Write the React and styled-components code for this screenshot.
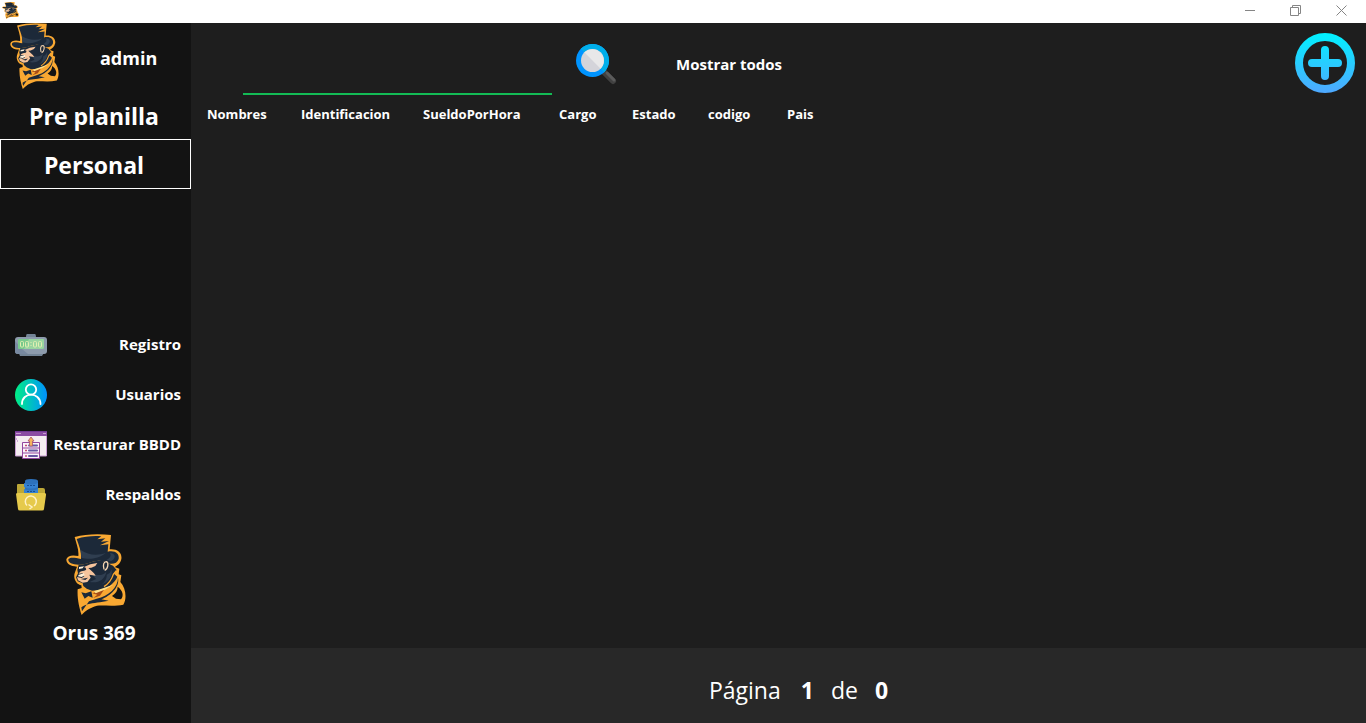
import React, { useId } from "react";
import styled, { createGlobalStyle } from "styled-components";

const GlobalStyle = createGlobalStyle`
  *, *::before, *::after { box-sizing: border-box; }
  body {
    margin: 0;
    background: #1e1e1e;
    color: #ffffff;
    font-family: "Segoe UI", "Open Sans", "Noto Sans", sans-serif;
    font-size: 15px;
    line-height: 20px;
  }
  button, input { font: inherit; color: inherit; }
  button { background: none; border: 0; padding: 0; cursor: pointer; }
  svg { display: block; flex: none; }
`;

const Window = styled.div`
  min-height: 100vh;
  display: flex;
  flex-direction: column;
`;

const TitleBar = styled.header`
  height: 23px;
  padding: 0 2px;
  display: flex;
  align-items: flex-start;
  justify-content: space-between;
  background: #ffffff;
  color: #858585;
`;

const AppMark = styled.div`
  padding-top: 2px;
`;

const WindowControls = styled.div`
  display: flex;
`;

const WindowButton = styled.button`
  width: 46px;
  height: 21px;
  display: grid;
  place-items: center;
`;

const Body = styled.div`
  flex: 1;
  display: grid;
  grid-template-columns: 191px 1fr;
`;

const Sidebar = styled.nav`
  display: flex;
  flex-direction: column;
  background: #131313;
`;

const Account = styled.div`
  height: 67px;
  padding-left: 10px;
  display: flex;
  align-items: flex-start;
  gap: 41px;
`;

const AccountName = styled.span`
  padding-top: 20px;
  font-size: 18px;
  line-height: 30px;
  font-weight: 700;
`;

const MainLink = styled.button`
  height: ${(p) => (p.$active ? 50 : 49)}px;
  padding: 2px 3px 0 0;
  border: ${(p) => (p.$active ? "1px solid #ffffff" : "0")};
  font-size: 23px;
  line-height: 32px;
  font-weight: 700;
`;

const ToolLinks = styled.div`
  margin-top: 131px;
  display: flex;
  flex-direction: column;
`;

const ToolLink = styled.button`
  height: 50px;
  padding: 0 10px 0 15px;
  display: flex;
  align-items: center;
  justify-content: space-between;
  font-weight: 700;
  white-space: nowrap;
`;

const ToolName = styled.span`
  padding-bottom: 2px;
`;

const Brand = styled.div`
  padding: 14px 0 0;
  display: flex;
  flex-direction: column;
  align-items: center;
  gap: 4px;
`;

const BrandName = styled.span`
  padding-right: 3px;
  font-size: 19px;
  line-height: 28px;
  font-weight: 700;
`;

const Content = styled.main`
  display: flex;
  flex-direction: column;
  background: #1e1e1e;
  min-width: 0;
`;

const Toolbar = styled.div`
  height: 72px;
  padding: 0 11px 0 52px;
  display: flex;
  align-items: center;
`;

const SearchInput = styled.input`
  align-self: stretch;
  width: 309px;
  padding: 20px 4px 0;
  background: transparent;
  border: 0;
  border-bottom: 2px solid #13bb55;
  outline: none;
  font-size: 24px;
`;

const IconButton = styled.button`
  margin-left: ${(p) => (p.$end ? "auto" : "24px")};
  padding-top: ${(p) => (p.$end ? "8px" : "10px")};
`;

const ShowAll = styled.button`
  margin-left: 59px;
  padding-top: 9px;
  font-weight: 700;
`;

const Table = styled.table`
  align-self: flex-start;
  border-collapse: collapse;
  table-layout: fixed;
  width: 656px;
`;

const HeadCell = styled.th`
  width: ${(p) => p.$width}px;
  height: 38px;
  padding: 0 0 0 16px;
  text-align: left;
  font-size: 13px;
  font-weight: 700;
`;

const Pager = styled.footer`
  height: 75px;
  margin-top: auto;
  padding: 8px 0 0 40px;
  display: flex;
  align-items: center;
  justify-content: center;
  gap: 20px;
  background: #282828;
  font-size: 23px;
  line-height: 32px;
`;

const Position = styled.div`
  display: flex;
  gap: 17px;
`;

function Logo({ width, height }) {
  return (
    <svg width={width} height={height} viewBox="32 28 180 243" preserveAspectRatio="none" aria-hidden="true">
      <path fill="#f9a832" d="M58 37C90 28 130 27 167 31L165 52L163 74C186 72 201 84 198 103C195 117 186 123 178 127L192 132L190 149L198 152L195 172C212 190 215 222 204 240C176 246 145 241 125 243C104 249 90 258 79 271C72 250 65 220 67 194L79 190L78 182C72 180 68 178 64 174C56 165 55 152 59 143L65 126C45 125 33 118 33 104C36 92 52 90 69 94C71 75 64 60 58 37Z" />
      <path fill="#1c2939" d="M64 43C88 35 116 33 138 35L126 44L150 41L137 51L161 49L134 62L159 59L157 81C179 76 193 87 190 103C185 119 165 122 146 111C119 101 98 122 70 120C51 120 38 114 39 104C42 97 57 98 77 103C79 78 70 62 64 43Z" />
      <path fill="#1c2939" d="M70 120C94 122 112 105 142 109C156 112 164 120 173 123L184 136L176 147L186 156C178 176 158 190 132 196L110 198L94 192L84 184L82 176L67 170L62 158L68 146L66 136Z" />
      <path fill="#2f3e50" d="M76 76C98 91 125 94 151 85C128 104 98 105 78 99ZM164 85C181 86 184 100 167 110L153 106C164 101 169 93 164 85ZM108 146C128 155 144 152 153 141C149 165 128 177 103 172L122 163ZM154 150C162 148 167 142 168 134C174 154 158 174 138 180C148 172 155 162 154 150Z" />
      <path fill="#f6c49c" d="M105 119L126 115L120 124L108 129L99 130L109 139L116 146L121 153L102 150L106 159L96 172L82 174L68 167L65 157L79 160L87 155L82 146L70 147L76 139L91 136L92 130L86 127Z" />
      <path fill="#fff0d8" d="M70 150L86 146L88 152L79 157L68 155ZM71 127L86 125L82 131L71 133Z" />
      <path fill="#1c2939" d="M74 134L93 133L90 137L73 141ZM76 163L98 159L90 166Z" />
      <path fill="none" stroke="#f5d5b2" strokeWidth="4" d="M146 134C142 121 145 111 153 111C161 113 158 134 148 137" />
      <path fill="none" stroke="#f9a832" strokeWidth="4" d="M183 138L174 149C168 168 158 178 146 186" />
      <path fill="#1c2939" d="M188 159C188 188 160 214 124 222L101 230L80 260L78 248C94 236 113 236 134 233L160 228L138 224C165 213 194 188 188 159Z" />
      <path fill="#131313" d="M187 186C203 198 206 213 197 224L182 222L170 214C181 206 187 198 187 186Z" />
      <path fill="#1c2939" d="M78 203L91 206L108 200L112 219L99 214L88 222Z" />
      <path fill="#a74c16" d="M111 206L147 194L134 213L114 220L126 210Z" />
      <path fill="#ffe18b" d="M116 200L174 180L151 194L121 206Z" />
    </svg>
  );
}

function ClockIcon() {
  return (
    <svg width="32" height="32" viewBox="0 0 32 32" aria-hidden="true">
      <path fill="#738496" d="M12 5Q11 5 11 8H21Q21 5 20 5ZM3 22L5 27H27L30 22Z" />
      <rect y="8" width="32" height="17" rx="3" fill="#8d9bac" />
      <path fill="#7889a0" d="M0 12V22Q0 25 3 25H13L7 20Z" />
      <rect x="3" y="10" width="26" height="10" rx="1" fill="#79c98c" />
      <path fill="#99d5a0" d="M14 10H28Q29 10 29 11V18Q29 20 27 20H9Z" />
      <g fill="none" stroke="#e1efb0" strokeWidth="1">
        <rect x="5.5" y="12.5" width="3" height="5.5" rx="1" />
        <rect x="10.5" y="12.5" width="3" height="5.5" rx="1" />
        <rect x="18.5" y="12.5" width="3" height="5.5" rx="1" />
        <rect x="23.5" y="12.5" width="3" height="5.5" rx="1" />
      </g>
      <path stroke="#e1efb0" d="M16 13V14M16 16V17" />
    </svg>
  );
}

function UserIcon() {
  const id = useId();
  return (
    <svg width="32" height="32" viewBox="0 0 32 32" aria-hidden="true">
      <linearGradient id={id}>
        <stop stopColor="#00ef85" />
        <stop offset="1" stopColor="#0091ff" />
      </linearGradient>
      <circle cx="16" cy="16" r="16" fill={`url(#${id})`} />
      <g fill="none" stroke="#ffffff" strokeWidth="1.8" strokeLinecap="round">
        <circle cx="16" cy="10.5" r="5.2" />
        <path d="M7 25C7 12.5 25 12.5 25.5 25" />
      </g>
    </svg>
  );
}

function RestoreDbIcon() {
  return (
    <svg width="32" height="32" viewBox="0 0 32 32" aria-hidden="true">
      <path fill="#f5edf1" d="M0 3H32V27H0Z" />
      <path fill="#8b4ca3" d="M0 2H32V7H0Z" />
      <path fill="#713893" d="M0 2H32V3H0Z" />
      <path fill="none" stroke="#c79bd0" d="M1 4.5H6M28 4.5H31M.5 7V27H7M31.5 7V27H25" />
      <path stroke="#b16ac1" d="M1 10H2M2 12H3" />
      <path fill="#fbf4fa" stroke="#93489f" d="M7.500 13.500H24.500V29.500H7.500ZM7.500 19H24.500M7.500 24H24.500" />
      <path stroke="#c44c73" strokeWidth="1.5" d="M10 16.500H12M10 21.500H12M10 27H12" />
      <path stroke="#6658a2" strokeWidth="2" strokeLinecap="round" d="M14 16.500H22M14 21.500H22M14 27H22" />
      <path fill="#f4b45d" stroke="#a75369" strokeWidth=".8" d="M16 8L19 12H17.500V17H14.500V12H13Z" />
    </svg>
  );
}

function BackupIcon() {
  return (
    <svg width="32" height="32" viewBox="0 0 32 32" aria-hidden="true">
      <path fill="#bda837" d="M2 6Q2 5 3 5H9L11 9H28Q30 9 30 11V18H2Z" />
      <path fill="#2d72bd" d="M10 2Q10 0 16 0Q23 0 23 2V15H10Z" />
      <path fill="#3582d2" d="M9 4Q16 7 23 4V8Q16 11 9 8ZM9 10Q16 13 23 10V15H9Z" />
      <path stroke="#174f94" d="M12 6.500H14M15 6.500H17M18 6.500H20M12 12.500H14M15 12.500H17M18 12.500H20" />
      <path fill="#e6ca4b" d="M1 15Q1 14 3 14H29Q31.500 14 31 16L29 30Q29 31.500 27 31.500H5Q3 31.500 3 30Z" />
      <path fill="none" stroke="#fff2c4" strokeWidth="1.500" d="M12 26.500A5.500 5.500 0 1 1 19 27M13.500 25.500L17 28L14.500 30" />
    </svg>
  );
}

function SearchIcon() {
  return (
    <svg width="41" height="41" viewBox="0 0 41 41" aria-hidden="true">
      <path stroke="#414141" strokeWidth="6" strokeLinecap="round" d="M28 28L37 37" />
      <path stroke="#5b5b5b" strokeWidth="3" strokeLinecap="round" d="M31 29L38 36" />
      <circle cx="16.500" cy="16.500" r="16.500" fill="#0094ff" />
      <path fill="#00aeea" d="M4.800 4.800A16.500 16.500 0 0 1 28.200 28.200Z" />
      <circle cx="16.500" cy="16.500" r="11.500" fill="#d4d4da" />
      <path fill="#e8e8e9" d="M8.370 8.370A11.500 11.500 0 0 1 24.630 24.630Z" />
    </svg>
  );
}

function AddIcon() {
  const id = useId();
  return (
    <svg width="60" height="60" viewBox="0 0 60 60" aria-hidden="true">
      <linearGradient id={id} gradientUnits="userSpaceOnUse" x1="0" y1="0" x2="0" y2="60">
        <stop stopColor="#00f2ff" />
        <stop offset="1" stopColor="#4fa8ff" />
      </linearGradient>
      <g fill="none" stroke={`url(#${id})`} strokeWidth="8" strokeLinecap="round">
        <circle cx="30" cy="30" r="26" />
        <path d="M30 17V43M17 30H43" />
      </g>
    </svg>
  );
}

function ControlIcon({ d }) {
  return (
    <svg width="11" height="11" viewBox="0 0 11 11" fill="none" stroke="currentColor" aria-hidden="true">
      <path d={d} />
    </svg>
  );
}

const controls = [
  { label: "Minimizar", d: "M1 5.500H11" },
  { label: "Restaurar", d: "M.5 2.500H8.500V10.500H.5ZM2.500 2.500V.5H10.500V8.500H8.500" },
  { label: "Cerrar", d: "M.5 .5L10.500 10.500M10.500 .5L.5 10.500" },
];

const tools = [
  { label: "Registro", Icon: ClockIcon },
  { label: "Usuarios", Icon: UserIcon },
  { label: "Restarurar BBDD", Icon: RestoreDbIcon },
  { label: "Respaldos", Icon: BackupIcon },
];

const columns = [
  { label: "Nombres", width: 94 },
  { label: "Identificacion", width: 122 },
  { label: "SueldoPorHora", width: 136 },
  { label: "Cargo", width: 73 },
  { label: "Estado", width: 76 },
  { label: "codigo", width: 79 },
  { label: "Pais", width: 76 },
];

export default function App() {
  return (
    <Window>
      <GlobalStyle />
      <TitleBar>
        <AppMark>
          <Logo width={17} height={17} />
        </AppMark>
        <WindowControls>
          {controls.map((c) => (
            <WindowButton key={c.label} type="button" aria-label={c.label}>
              <ControlIcon d={c.d} />
            </WindowButton>
          ))}
        </WindowControls>
      </TitleBar>
      <Body>
        <Sidebar>
          <Account>
            <Logo width={49} height={66} />
            <AccountName>admin</AccountName>
          </Account>
          <MainLink type="button">Pre planilla</MainLink>
          <MainLink type="button" $active>Personal</MainLink>
          <ToolLinks>
            {tools.map(({ label, Icon }) => (
              <ToolLink key={label} type="button">
                <Icon />
                <ToolName>{label}</ToolName>
              </ToolLink>
            ))}
          </ToolLinks>
          <Brand>
            <Logo width={60} height={81} />
            <BrandName>Orus 369</BrandName>
          </Brand>
        </Sidebar>
        <Content>
          <Toolbar>
            <SearchInput type="text" aria-label="Buscar personal" />
            <IconButton type="button" aria-label="Buscar">
              <SearchIcon />
            </IconButton>
            <ShowAll type="button">Mostrar todos</ShowAll>
            <IconButton type="button" aria-label="Agregar" $end>
              <AddIcon />
            </IconButton>
          </Toolbar>
          <Table>
            <thead>
              <tr>
                {columns.map((c) => (
                  <HeadCell key={c.label} scope="col" $width={c.width}>{c.label}</HeadCell>
                ))}
              </tr>
            </thead>
          </Table>
          <Pager>
            <span>Página</span>
            <Position>
              <strong>1</strong>
              <span>de</span>
              <strong>0</strong>
            </Position>
          </Pager>
        </Content>
      </Body>
    </Window>
  );
}
